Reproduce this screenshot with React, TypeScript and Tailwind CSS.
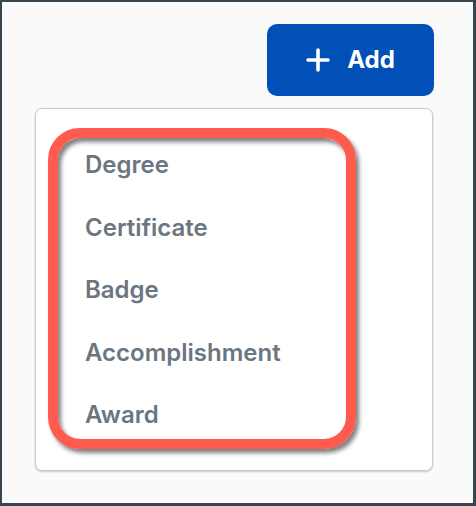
import React from "react";

const items = ["Degree", "Certificate", "Badge", "Accomplishment", "Award"];

export default function App() {
  return (
    <div
      className="w-[476px] h-[506px] bg-[#fafafa] border-[#37454f] border-t-2 border-l-2 border-r-[3px] border-b-[3px] flex flex-col pl-[33px] pr-[40px] pt-[22px]"
      style={{ fontFamily: "Inter, 'Noto Sans', sans-serif" }}
    >
      <button className="self-end mr-[-1px] w-[167px] h-[72px] rounded-[10px] bg-[#0050b8] text-white flex items-center justify-center gap-[17px]">
        <svg width="24" height="24" viewBox="0 0 24 24" fill="none" stroke="white" strokeWidth="3.6" strokeLinecap="round">
          <line x1="12" y1="2" x2="12" y2="22" />
          <line x1="2" y1="12" x2="22" y2="12" />
        </svg>
        <span className="text-[24px] font-bold leading-none">Add</span>
      </button>
      <div className="relative mt-[12px] w-[398px] h-[363px] bg-white border border-[#c8ccd0] rounded-[7px] shadow-[0_1px_2px_rgba(0,0,0,0.2)] pt-[25px] pl-[49px]">
        <ul className="flex flex-col">
          {items.map((t) => (
            <li key={t} className="h-[62.5px] flex items-center text-[24px] font-semibold text-[#6b7681] leading-[28px]">
              {t}
            </li>
          ))}
        </ul>
        <div className="absolute left-[12px] top-[19px] w-[308px] h-[321px] rounded-[32px] border-[10px] border-[#ff5a4e] shadow-[3px_4px_4px_rgba(0,0,0,0.5),inset_3px_4px_4px_rgba(0,0,0,0.5)]" />
      </div>
    </div>
  );
}
